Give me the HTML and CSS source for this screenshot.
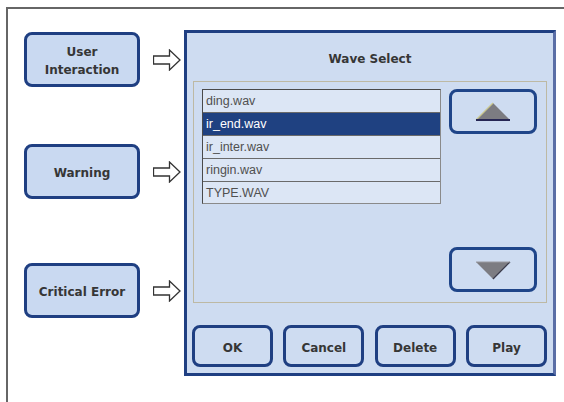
FILE: index.html
```html
<!DOCTYPE html>
<html>
<head>
  <meta name="viewport" content="width=device-width, initial-scale=1.0">
  <title>Wave Select</title>
  <link rel="stylesheet" href="styles.css">
</head>
<body>

  <div class="frame">

    <!-- message types on the left -->
    <div class="types">
      <div class="type-row">
        <div class="type-btn">User<br>Interaction</div>
        <svg class="arrow" width="28" height="22" viewBox="0 0 28 22"><polygon points="0.5,7 16.5,7 16.5,1 27,11 16.5,21 16.5,15 0.5,15" fill="#fff" stroke="#333" stroke-width="1.3"/></svg>
      </div>
      <div class="type-row">
        <div class="type-btn">Warning</div>
        <svg class="arrow" width="28" height="22" viewBox="0 0 28 22"><polygon points="0.5,7 16.5,7 16.5,1 27,11 16.5,21 16.5,15 0.5,15" fill="#fff" stroke="#333" stroke-width="1.3"/></svg>
      </div>
      <div class="type-row type-row-last">
        <div class="type-btn">Critical Error</div>
        <svg class="arrow" width="28" height="22" viewBox="0 0 28 22"><polygon points="0.5,7 16.5,7 16.5,1 27,11 16.5,21 16.5,15 0.5,15" fill="#fff" stroke="#333" stroke-width="1.3"/></svg>
      </div>
    </div>

    <!-- dialog -->
    <div class="dialog">
      <div class="dialog-title">Wave Select</div>

      <div class="group">
        <ul class="wave-list">
          <li>ding.wav</li>
          <li class="selected">ir_end.wav</li>
          <li>ir_inter.wav</li>
          <li>ringin.wav</li>
          <li>TYPE.WAV</li>
        </ul>
        <div class="scroll-btns">
          <div class="scroll-btn">
            <svg width="36" height="20" viewBox="0 0 36 20">
              <polygon points="1,18 18,1 35,18" fill="#7c7c82"/>
              <line x1="1" y1="18" x2="18" y2="1" stroke="#c9c78e" stroke-width="1.2"/>
              <line x1="1" y1="18" x2="35" y2="18" stroke="#262654" stroke-width="2.2"/>
            </svg>
          </div>
          <div class="scroll-btn">
            <svg width="36" height="20" viewBox="0 0 36 20">
              <polygon points="1,2 35,2 18,19" fill="#7c7c82"/>
              <line x1="35" y1="2" x2="18" y2="19" stroke="#3a3a4a" stroke-width="1.2"/>
              <line x1="1" y1="2" x2="35" y2="2" stroke="#9a9aa0" stroke-width="1"/>
            </svg>
          </div>
        </div>
      </div>

      <div class="actions">
        <div class="btn">OK</div>
        <div class="btn">Cancel</div>
        <div class="btn">Delete</div>
        <div class="btn">Play</div>
      </div>
    </div>

  </div>

</body>
</html>
```

FILE: styles.css
```css
* { box-sizing: border-box; }
body {
  margin: 0;
  background-color: #fff;
  font-family: "DejaVu Sans", sans-serif;
  overflow: hidden;
}
.frame {
  display: flex;
  margin: 7px 0 0 6px;
  padding: 21px 0 0 16px;
  min-height: 400px;
  border-top: 2px solid #666;
  border-left: 2px solid #666;
}

/* left column */
.types {
  display: flex;
  flex-direction: column;
  width: 160px;
  padding-top: 2px;
}
.type-row {
  display: flex;
  align-items: center;
  height: 55px;
  margin-bottom: 57px;
}
.type-row:nth-child(2) {
  margin-bottom: 64px;
}
.type-btn {
  display: flex;
  align-items: center;
  justify-content: center;
  width: 116px;
  height: 55px;
  padding-top: 2px;
  border: 3px solid #1f3f82;
  border-radius: 8px;
  background-color: #c9d9f1;
  color: #363636;
  font-size: 12px;
  font-weight: bold;
  line-height: 18px;
  text-align: center;
}
.arrow {
  margin-left: 13px;
}

/* dialog */
.dialog {
  display: flex;
  flex-direction: column;
  width: 372px;
  height: 346px;
  padding: 0 6px 0 6px;
  border: 3px solid #1f3f82;
  border-right-color: #5a6ea6;
  background-color: #cedcf1;
}
.dialog-title {
  height: 48px;
  padding-top: 2px;
  line-height: 48px;
  text-align: center;
  font-size: 12px;
  font-weight: bold;
  color: #363636;
}
.group {
  display: flex;
  gap: 8px;
  height: 222px;
  padding: 7px 9px 10px 8px;
  border: 1px solid #bdb9a4;
}
.wave-list {
  list-style: none;
  margin: 0;
  padding: 0;
  width: 239px;
  height: 115px;
  border: 1px solid #8a8a8a;
  border-top-color: #4a4a4a;
  border-left-color: #4a4a4a;
  background-color: #dce6f5;
  font-family: "Liberation Sans", Arial, sans-serif;
  font-size: 12.5px;
  color: #505050;
}
.wave-list li {
  height: 23px;
  line-height: 22px;
  padding-left: 3px;
  border-bottom: 1px solid #6a6a6a;
}
.wave-list li:last-child {
  height: 21px;
  border-bottom: none;
}
.wave-list li.selected {
  background-color: #1f4181;
  color: #fff;
}
.scroll-btns {
  display: flex;
  flex-direction: column;
  justify-content: space-between;
  width: 88px;
}
.scroll-btn {
  display: flex;
  align-items: center;
  justify-content: center;
  height: 45px;
  border: 3px solid #1f4589;
  border-radius: 8px;
}
.actions {
  display: flex;
  justify-content: space-between;
  margin-top: 22px;
  margin-left: -1px;
}
.btn {
  display: flex;
  align-items: center;
  justify-content: center;
  width: 81px;
  height: 42px;
  padding-top: 3px;
  border: 3px solid #1f3f82;
  border-radius: 8px;
  color: #363636;
  font-size: 12px;
  font-weight: bold;
}
```
